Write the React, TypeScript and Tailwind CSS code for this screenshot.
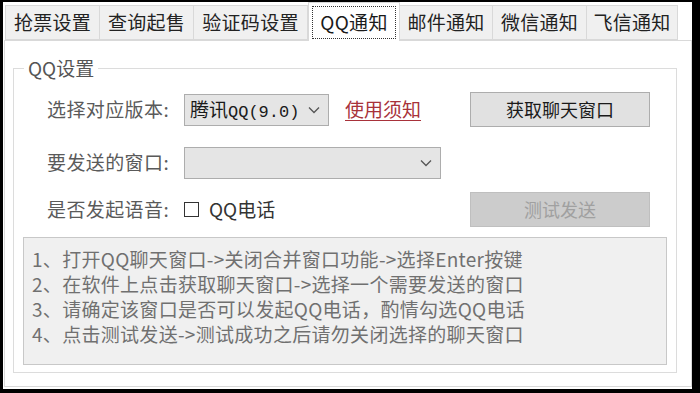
import React from 'react'

const font = { fontFamily: '"Noto Sans CJK SC", "Noto Sans", sans-serif' }

const tabs = [
  { label: '抢票设置', w: 'w-[95px]' },
  { label: '查询起售', w: 'w-[95px]' },
  { label: '验证码设置', w: 'w-[115px]' },
  { label: 'QQ通知', w: 'w-[92px]', active: true },
  { label: '邮件通知', w: 'w-[94px]' },
  { label: '微信通知', w: 'w-[95px]' },
  { label: '飞信通知', w: 'w-[92px]' },
]

const lines = [
  '1、打开QQ聊天窗口->关闭合并窗口功能->选择Enter按键',
  '2、在软件上点击获取聊天窗口->选择一个需要发送的窗口',
  '3、请确定该窗口是否可以发起QQ电话，酌情勾选QQ电话',
  '4、点击测试发送->测试成功之后请勿关闭选择的聊天窗口',
]

function Chevron() {
  return (
    <svg width="12" height="8" viewBox="0 0 12 8" className="shrink-0">
      <path d="M1 1.5 L6 6.5 L11 1.5" fill="none" stroke="#555" strokeWidth="1.3" />
    </svg>
  )
}

function Tab({ label, w, active }: { label: string; w: string; active?: boolean }) {
  if (active) {
    return (
      <div className={`${w} h-[39px] -mb-px relative z-10 bg-white border border-b-0 border-[#d9d9d9] flex items-stretch p-[3px] pb-[2px]`}>
        <div className="flex-1 border border-dotted border-[#333] flex items-center justify-center text-[19px] tracking-[0.3px] text-[#1a1a1a]">
          {label}
        </div>
      </div>
    )
  }
  return (
    <div className={`${w} h-[35px] bg-[#f0f0f0] border border-[#d9d9d9] -ml-px first:ml-0 flex items-center justify-center text-[19px] tracking-[0.3px] text-[#222]`}>
      {label}
    </div>
  )
}

export default function App() {
  return (
    <div className="w-[700px] h-[393px] bg-black pt-[2px] pl-[3px] pr-[8px] pb-[4px]" style={font}>
      <div className="w-full h-full bg-white flex flex-col">
        <div className="h-[38px] flex items-end pl-[2px]">
          {tabs.map((t) => (
            <Tab key={t.label} {...t} />
          ))}
        </div>
        <div className="flex-1 ml-px mb-[2px] border border-[#d9d9d9] bg-white pt-[15px] pl-[8px] pr-[14px] pb-[13px]">
          <fieldset className="h-full border border-[#dcdcdc] px-[9px] pb-[7px]">
            <legend className="ml-px px-[4px] text-[19px] leading-[24px] text-[#555]">QQ设置</legend>

            <div className="mt-[12px] h-[35px] flex items-center pl-[24px] pr-[17px]">
              <span className="w-[137px] text-[19px] tracking-[0.4px] text-[#5a5a5a] whitespace-nowrap">选择对应版本:</span>
              <div className="w-[145px] h-[32px] bg-[#e5e5e5] border border-[#adadad] flex items-center pl-[5px] pr-[8px]">
                <span className="flex-1 text-[19px] text-[#1a1a1a] leading-none whitespace-nowrap">
                  腾讯<span className="text-[17px]" style={{ fontFamily: '"Liberation Mono", monospace' }}>QQ(9.0)</span>
                </span>
                <Chevron />
              </div>
              <a className="ml-[16px] text-[19px] text-[#a8323a] underline underline-offset-[3px]">使用须知</a>
              <button className="ml-auto w-[180px] h-[35px] bg-[#e1e1e1] border border-[#adadad] text-[18px] text-[#1a1a1a]">
                获取聊天窗口
              </button>
            </div>

            <div className="mt-[18px] h-[35px] flex items-center pl-[24px] pr-[17px]">
              <span className="w-[137px] text-[19px] tracking-[0.4px] text-[#5a5a5a] whitespace-nowrap">要发送的窗口:</span>
              <div className="w-[257px] h-[32px] bg-[#e5e5e5] border border-[#adadad] flex items-center justify-end pr-[8px]">
                <Chevron />
              </div>
            </div>

            <div className="mt-[12px] h-[35px] flex items-center pl-[24px] pr-[17px]">
              <span className="w-[137px] text-[19px] tracking-[0.4px] text-[#5a5a5a] whitespace-nowrap">是否发起语音:</span>
              <span className="w-[15px] h-[15px] border border-[#333] bg-white" />
              <span className="ml-[10px] text-[19px] text-[#333]">QQ电话</span>
              <button className="ml-auto w-[180px] h-[35px] bg-[#cccccc] border border-[#bfbfbf] text-[18px] text-[#a0a0a0]">
                测试发送
              </button>
            </div>

            <div className="mt-[10px] h-[128px] bg-[#f0f0f0] border border-[#c8c8c8] pl-[8px] pt-[8px] text-[19px] tracking-[0.3px] leading-[25px] text-[#707070]">
              {lines.map((l) => (
                <div key={l} className="whitespace-nowrap">{l}</div>
              ))}
            </div>
          </fieldset>
        </div>
      </div>
    </div>
  )
}
